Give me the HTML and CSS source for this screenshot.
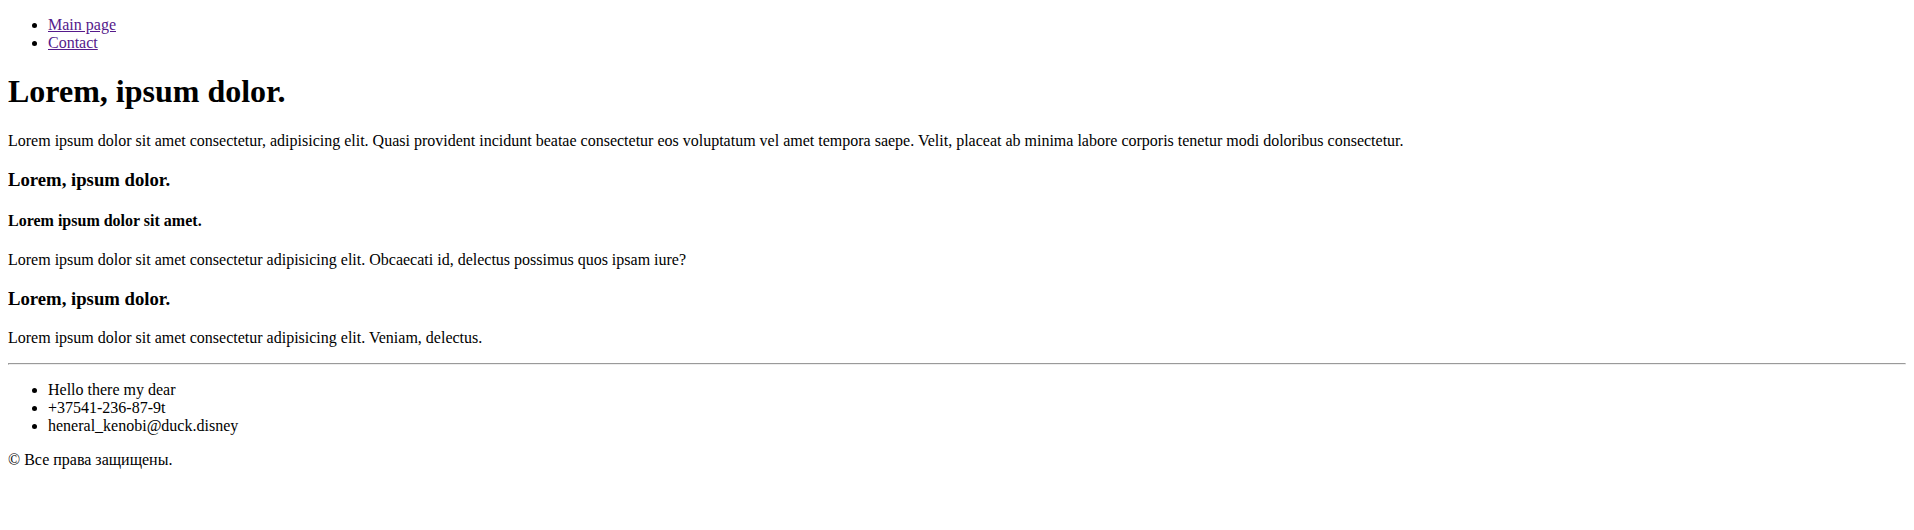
FILE: index.html
```html
<!DOCTYPE html>
<html lang="ru">
<head>
<meta charset="utf-8">
<title>Lorem</title>
<link rel="stylesheet" href="styles.css">
</head>
<body>
<header>
  <nav>
    <ul class="nav-list">
      <li><a href="#" class="visited">Main page</a></li>
      <li><a href="#" class="visited">Contact</a></li>
    </ul>
  </nav>
</header>
<main>
  <h1>Lorem, ipsum dolor.</h1>
  <p>Lorem ipsum dolor sit amet consectetur, adipisicing elit. Quasi provident incidunt beatae consectetur eos voluptatum vel amet tempora saepe. Velit, placeat ab minima labore corporis tenetur modi doloribus consectetur.</p>
  <section>
    <h3>Lorem, ipsum dolor.</h3>
    <h4>Lorem ipsum dolor sit amet.</h4>
    <p>Lorem ipsum dolor sit amet consectetur adipisicing elit. Obcaecati id, delectus possimus quos ipsam iure?</p>
  </section>
  <section>
    <h3>Lorem, ipsum dolor.</h3>
    <p>Lorem ipsum dolor sit amet consectetur adipisicing elit. Veniam, delectus.</p>
  </section>
</main>
<hr>
<footer>
  <ul>
    <li>Hello there my dear</li>
    <li>+37541-236-87-9t</li>
    <li>heneral_kenobi@duck.disney</li>
  </ul>
  <p>&copy; Все права защищены.</p>
</footer>
</body>
</html>
```

FILE: styles.css
```css
html {
  margin: 0;
  padding: 0;
}

body {
  margin: 0 8px 8px;
  font-family: "Liberation Serif", "Times New Roman", serif;
  color: #000;
  background: #fff;
}

.nav-list {
  margin-top: 16px;
}

.visited {
  color: #551a8b;
}
```
